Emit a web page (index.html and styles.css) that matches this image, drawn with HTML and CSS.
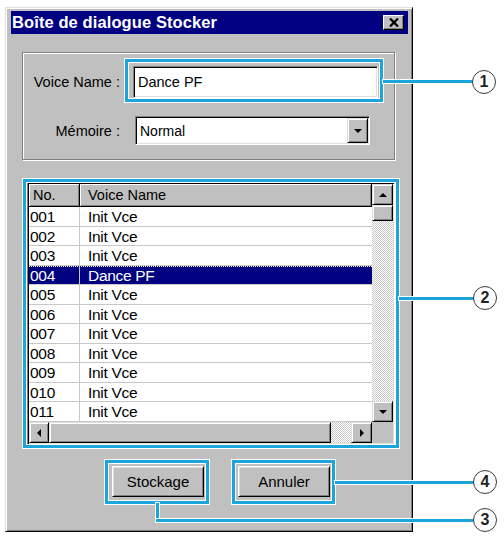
FILE: index.html
```html
<!DOCTYPE html>
<html lang="fr">
<head>
<meta charset="utf-8">
<title>Boîte de dialogue Stocker</title>
<link rel="stylesheet" href="styles.css">
</head>
<body>
<div class="page">
  <div class="window">
    <div class="titlebar">
      <span class="title">Boîte de dialogue Stocker</span>
      <span class="close"><svg width="10" height="9" viewBox="0 0 10 9"><path d="M1 0.5 L9 8.5 M9 0.5 L1 8.5" stroke="#000" stroke-width="2.2" fill="none"/></svg></span>
    </div>
    <div class="group">
      <div class="field field-name">
        <span class="label">Voice Name :</span>
        <div class="input">Dance PF</div>
      </div>
      <div class="field field-mem">
        <span class="label">Mémoire :</span>
        <div class="select"><span class="select-text">Normal</span><span class="drop-btn"><span class="tri tri-down"></span></span></div>
      </div>
    </div>
    <div class="list">
      <div class="list-main">
        <div class="list-header"><div class="hcell col-no">No.</div><div class="hcell col-name">Voice Name</div></div>
        <div class="row"><span class="col-no">001</span><span class="col-name">Init Vce</span></div>
        <div class="row"><span class="col-no">002</span><span class="col-name">Init Vce</span></div>
        <div class="row"><span class="col-no">003</span><span class="col-name">Init Vce</span></div>
        <div class="row selected"><span class="col-no">004</span><span class="col-name">Dance PF</span></div>
        <div class="row"><span class="col-no">005</span><span class="col-name">Init Vce</span></div>
        <div class="row"><span class="col-no">006</span><span class="col-name">Init Vce</span></div>
        <div class="row"><span class="col-no">007</span><span class="col-name">Init Vce</span></div>
        <div class="row"><span class="col-no">008</span><span class="col-name">Init Vce</span></div>
        <div class="row"><span class="col-no">009</span><span class="col-name">Init Vce</span></div>
        <div class="row"><span class="col-no">010</span><span class="col-name">Init Vce</span></div>
        <div class="row"><span class="col-no">011</span><span class="col-name">Init Vce</span></div>
      </div>
      <div class="vscroll">
        <div class="sb-btn"><span class="tri tri-up"></span></div>
        <div class="sb-thumb-v"></div>
        <div class="sb-track"></div>
        <div class="sb-btn"><span class="tri tri-down"></span></div>
      </div>
      <div class="hscroll">
        <div class="sb-btn sb-left"><span class="tri tri-left"></span></div>
        <div class="sb-thumb-h"></div>
        <div class="sb-track"></div>
        <div class="sb-btn"><span class="tri tri-right"></span></div>
      </div>
      <div class="corner"></div>
    </div>
    <div class="buttons">
      <button class="btn" type="button">Stockage</button>
      <button class="btn" type="button">Annuler</button>
    </div>
  </div>

  <div class="callout co-name"></div>
  <div class="callout co-list"></div>
  <div class="callout co-store"></div>
  <div class="callout co-cancel"></div>

  <div class="lead ld-1"></div>
  <div class="lead ld-2"></div>
  <div class="lead ld-3v"></div>
  <div class="lead ld-3h"></div>
  <div class="lead ld-4"></div>

  <div class="num n-1">1</div>
  <div class="num n-2">2</div>
  <div class="num n-3">3</div>
  <div class="num n-4">4</div>
</div>
</body>
</html>
```

FILE: styles.css
```css
* { box-sizing: border-box; }
html, body { margin: 0; background: #fff; }
body {
  font-family: "Liberation Sans", Arial, sans-serif;
  color: #000;
  width: 504px;
  height: 537px;
  overflow: hidden;
}
.page { position: relative; padding: 7px 0 0 5px; height: 537px; }

.window {
  width: 408px;
  height: 525px;
  background: #c0c0c0;
  border: 1px solid;
  border-color: #dfdfdf #000 #000 #dfdfdf;
  box-shadow: inset 1px 1px #fff, inset -1px -1px #808080;
  padding: 3px 4px 0 5px;
}

.titlebar {
  height: 23px;
  background: #000080;
  display: flex;
  align-items: center;
  justify-content: space-between;
  padding: 0 4px 0 1px;
}
.title { color: #fff; font-weight: bold; font-size: 16.5px; letter-spacing: 0.1px; }
.close {
  width: 21px;
  height: 15px;
  background: #c0c0c0;
  border: 1px solid;
  border-color: #fff #000 #000 #fff;
  box-shadow: inset -1px -1px #808080;
  display: flex;
  align-items: center;
  justify-content: center;
}
.close svg { display: block; }

.group {
  margin: 18px 0 0 11px;
  width: 373px;
  height: 108px;
  border: 1px solid #808080;
  box-shadow: inset 1px 1px #fff, 1px 1px #fff;
  padding-top: 13px;
}
.field { display: flex; align-items: center; font-size: 14.5px; }
.label { width: 97px; text-align: right; flex: none; }
.field-name .input { margin-left: 13px; width: 245px; height: 32px; }
.field-mem { margin-top: 18px; }
.field-mem .select { margin-left: 15px; width: 235px; height: 29px; }
.input, .select {
  background: #fff;
  border: 1px solid;
  border-color: #808080 #fff #fff #808080;
  box-shadow: inset 1px 1px #000, inset -1px -1px #dfdfdf;
  display: flex;
  align-items: center;
  padding-left: 4px;
}
.select { justify-content: space-between; padding-right: 1px; font-size: 14px; }
.drop-btn {
  width: 21px;
  height: 25px;
  background: #c0c0c0;
  border: 1px solid;
  border-color: #dfdfdf #000 #000 #dfdfdf;
  box-shadow: inset 1px 1px #fff, inset -1px -1px #808080;
  display: flex;
  align-items: center;
  justify-content: center;
}

.tri { width: 0; height: 0; display: block; }
.tri-down { border-left: 4px solid transparent; border-right: 4px solid transparent; border-top: 4px solid #000; }
.tri-up { border-left: 4px solid transparent; border-right: 4px solid transparent; border-bottom: 4px solid #000; }
.tri-left { border-top: 4px solid transparent; border-bottom: 4px solid transparent; border-right: 4px solid #000; }
.tri-right { border-top: 4px solid transparent; border-bottom: 4px solid transparent; border-left: 4px solid #000; }

.list {
  margin: 22px 0 0 16px;
  width: 368px;
  height: 263px;
  border: 1px solid;
  border-color: #808080 #fff #fff #808080;
  padding: 1px;
  box-shadow: inset 1px 1px #000, inset -1px -1px #dfdfdf;
  display: grid;
  grid-template-columns: 343px 21px;
  grid-template-rows: 238px 21px;
  background: #fff;
}
.list-main { background: #fff; overflow: hidden; }
.list-header { display: flex; height: 23px; font-size: 14.5px; }
.hcell {
  background: #c0c0c0;
  height: 23px;
  display: flex;
  align-items: center;
  border-right: 1px solid #000;
  border-bottom: 1px solid #000;
  box-shadow: inset 1px 1px #fff, inset -1px -1px #808080;
}
.list-header .col-no { width: 51px; padding-left: 4px; }
.list-header .col-name { flex: 1; padding-left: 8px; }

.row {
  display: flex;
  height: 19.5px;
  border-bottom: 1px solid #c8c8c8;
  font-size: 15.5px;
  letter-spacing: -0.3px;
  line-height: 16.5px;
}
.row .col-no { width: 51px; border-right: 1px solid #c8c8c8; padding: 2px 0 0 1px; }
.row .col-name { flex: 1; padding: 2px 0 0 8px; }
.row.selected {
  background: repeating-linear-gradient(90deg, #fff 0 1px, #000080 1px 2px) top left / 100% 1px no-repeat, #000080;
  color: #fff;
}

.vscroll { display: flex; flex-direction: column; }
.hscroll { display: flex; }
.sb-btn {
  width: 21px;
  height: 21px;
  flex: none;
  background: #c0c0c0;
  border: 1px solid;
  border-color: #dfdfdf #000 #000 #dfdfdf;
  box-shadow: inset 1px 1px #fff, inset -1px -1px #808080;
  display: flex;
  align-items: center;
  justify-content: center;
}
.sb-left { width: 20px; }
.sb-thumb-v, .sb-thumb-h {
  flex: none;
  background: #c0c0c0;
  border: 1px solid;
  border-color: #dfdfdf #000 #000 #dfdfdf;
  box-shadow: inset 1px 1px #fff, inset -1px -1px #808080;
}
.sb-thumb-v { height: 16px; }
.sb-thumb-h { width: 282px; }
.sb-track {
  flex: 1;
  background: repeating-conic-gradient(#c8c8c8 0 25%, #fff 0 50%) 0 0 / 2px 2px;
}
.corner { background: #c0c0c0; }

.buttons { display: flex; gap: 34px; margin: 21px 0 0 101px; }
.btn {
  width: 92px;
  height: 31px;
  padding: 0;
  font-family: "Liberation Sans", Arial, sans-serif;
  font-size: 15px;
  color: #000;
  background: #c0c0c0;
  border: 1px solid;
  border-color: #fff #000 #000 #fff;
  box-shadow: inset 1px 1px #dfdfdf, inset -1px -1px #808080;
}

/* annotations */
.callout {
  position: absolute;
  border: 3px solid #1ba5db;
  box-shadow: 0 0 0 1px #fff, inset 0 0 0 1px #fff;
}
.co-name { left: 125px; top: 59px; width: 258px; height: 43px; }
.co-list { left: 23px; top: 179px; width: 376px; height: 269px; }
.co-store { left: 105px; top: 460px; width: 104px; height: 44px; }
.co-cancel { left: 232px; top: 460px; width: 103px; height: 44px; }

.lead { position: absolute; background: #1ba5db; box-shadow: 0 0 0 1px #fff; }
.ld-1 { left: 383px; top: 80px; width: 91px; height: 3px; }
.ld-2 { left: 399px; top: 297px; width: 75px; height: 3px; }
.ld-3v { left: 156px; top: 503px; width: 3px; height: 19px; }
.ld-3h { left: 156px; top: 519px; width: 318px; height: 3px; }
.ld-4 { left: 335px; top: 481px; width: 139px; height: 3px; }

.num {
  position: absolute;
  width: 24px;
  height: 24px;
  border-radius: 50%;
  border: 1.3px solid #3a3a3a;
  background: #fff;
  font-family: "Liberation Sans", Arial, sans-serif;
  font-weight: bold;
  font-size: 16px;
  color: #222;
  display: flex;
  align-items: center;
  justify-content: center;
}
.n-1 { left: 472px; top: 70px; }
.n-2 { left: 473px; top: 286px; }
.n-3 { left: 473px; top: 508px; }
.n-4 { left: 473px; top: 470px; }
```
